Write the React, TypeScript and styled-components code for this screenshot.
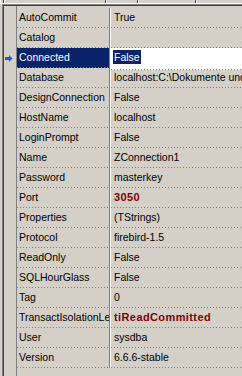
import React from 'react';
import styled, { createGlobalStyle } from 'styled-components';

const GlobalStyle = createGlobalStyle`
	html, body {
		margin: 0;
		padding: 0;
		background: #d4d0c8;
	}
`;

type Prop = {
	name: string;
	value: string;
	modified?: boolean;
};

const props: Prop[] = [
	{ name: 'AutoCommit', value: 'True' },
	{ name: 'Catalog', value: '' },
	{ name: 'Connected', value: 'False' },
	{ name: 'Database', value: 'localhost:C:\\Dokumente und Einstellungen\\db.fdb' },
	{ name: 'DesignConnection', value: 'False' },
	{ name: 'HostName', value: 'localhost' },
	{ name: 'LoginPrompt', value: 'False' },
	{ name: 'Name', value: 'ZConnection1' },
	{ name: 'Password', value: 'masterkey' },
	{ name: 'Port', value: '3050', modified: true },
	{ name: 'Properties', value: '(TStrings)' },
	{ name: 'Protocol', value: 'firebird-1.5' },
	{ name: 'ReadOnly', value: 'False' },
	{ name: 'SQLHourGlass', value: 'False' },
	{ name: 'Tag', value: '0' },
	{ name: 'TransactIsolationLevel', value: 'tiReadCommitted', modified: true },
	{ name: 'User', value: 'sysdba' },
	{ name: 'Version', value: '6.6.6-stable' }
];

const SELECTED = 'Connected';

// bottoms of the tab headers above the grid
const tabs = [3, 101, 31, 57, 46];

const Window = styled.div`
	width: 242px;
	height: 376px;
	overflow: hidden;
	display: flex;
	flex-direction: column;
	background: #d4d0c8;
	font-family: "Liberation Sans", Arial, sans-serif;
	font-size: 10.5px;
	color: #000;
`;

const TabStrip = styled.div`
	display: flex;
	height: 3px;
	flex-shrink: 0;
`;

const TabEdge = styled.div<{ $w: number }>`
	flex: 0 0 ${(p) => p.$w}px;
	border-right: 1px solid #404040;
	box-shadow: inset 1px 0 #ffffff;
`;

const Frame = styled.div`
	flex: 1;
	display: flex;
	flex-direction: column;
	border-top: 1px solid #ffffff;
	min-height: 0;
`;

const Sunken = styled.div`
	flex: 1;
	display: flex;
	margin-left: 2px;
	border-top: 1px solid #808080;
	border-left: 1px solid #808080;
	min-height: 0;
`;

const Inner = styled.div`
	flex: 1;
	display: flex;
	border-top: 1px solid #404040;
	border-left: 1px solid #404040;
	min-width: 0;
`;

const Gutter = styled.div`
	flex: 0 0 12px;
	padding-top: 2px;
	border-right: 1px solid #808080;
`;

const GutterCell = styled.div`
	height: 20px;
	display: flex;
	align-items: center;
	padding-left: 1px;
`;

const Grid = styled.div`
	flex: 1;
	padding-top: 2px;
	min-width: 0;
`;

const Row = styled.div`
	display: grid;
	grid-template-columns: 93px 1fr;
	height: 20px;
`;

const Cell = styled.div`
	height: 20px;
	line-height: 19px;
	white-space: nowrap;
	overflow: hidden;
	background-image: linear-gradient(to right, #808080 1px, transparent 1px);
	background-size: 3px 1px;
	background-repeat: repeat-x;
	background-position: 0 bottom;
`;

const NameCell = styled(Cell)<{ $active?: boolean }>`
	padding-left: 2px;
	border-right: 1px solid #808080;
	background-color: ${(p) => (p.$active ? '#0a246a' : 'transparent')};
	color: ${(p) => (p.$active ? '#ffffff' : '#000000')};
`;

const ValueCell = styled(Cell)<{ $modified?: boolean }>`
	padding-left: 3px;
	border-left: 1px solid #ffffff;
	color: ${(p) => (p.$modified ? '#800000' : '#000000')};
	font-weight: ${(p) => (p.$modified ? 700 : 400)};
	font-size: ${(p) => (p.$modified ? '11px' : 'inherit')};
	letter-spacing: ${(p) => (p.$modified ? '0.4px' : 'normal')};
`;

const EditCell = styled(ValueCell)`
	background-color: #ffffff;
	padding-top: 2px;
`;

const Selection = styled.span`
	display: inline-block;
	margin-left: -1px;
	padding: 0 1px;
	line-height: 14px;
	vertical-align: top;
	background: #0a246a;
	color: #ffffff;
`;

const Arrow = () => (
	<svg width='8' height='7' viewBox='0 0 8 7'>
		<polygon points='0,2 4,2 4,0 7.5,3.5 4,7 4,5 0,5' fill='#1f5ad8' />
	</svg>
);

const App = () => (
	<>
		<GlobalStyle />
		<Window>
			<TabStrip>
				{tabs.map((w, i) => <TabEdge key={i} $w={w} />)}
			</TabStrip>
			<Frame>
				<Sunken>
					<Inner>
						<Gutter>
							{props.map((p) => (
								<GutterCell key={p.name}>{p.name === SELECTED && <Arrow />}</GutterCell>
							))}
						</Gutter>
						<Grid>
							{props.map((p) => {
								const active = p.name === SELECTED;
								return (
									<Row key={p.name}>
										<NameCell $active={active}>{p.name}</NameCell>
										{active ? (
											<EditCell>
												<Selection>{p.value}</Selection>
											</EditCell>
										) : (
											<ValueCell $modified={p.modified}>{p.value}</ValueCell>
										)}
									</Row>
								);
							})}
						</Grid>
					</Inner>
				</Sunken>
			</Frame>
		</Window>
	</>
);

export default App;
